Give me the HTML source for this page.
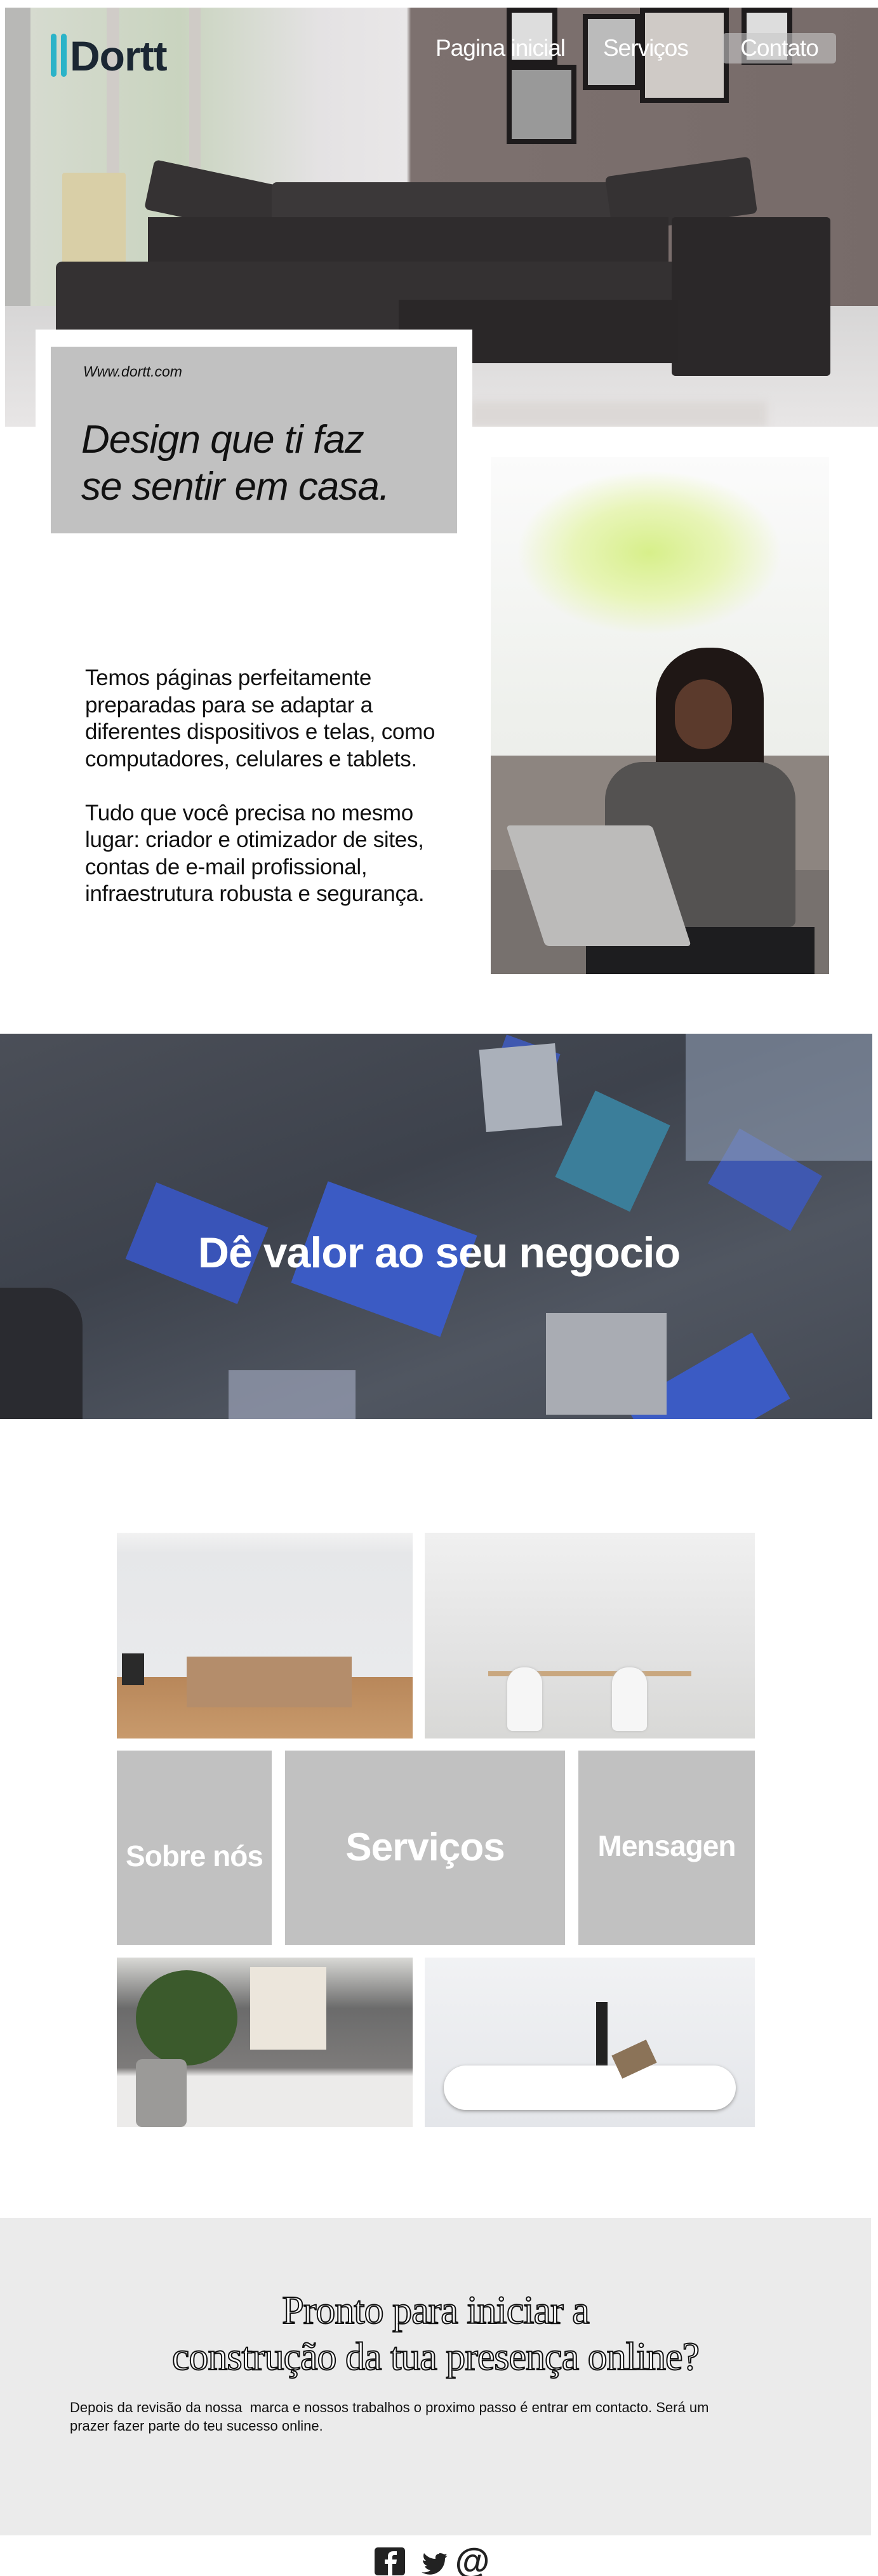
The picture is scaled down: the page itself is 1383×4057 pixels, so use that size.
<!DOCTYPE html>
<html><head><meta charset="utf-8">
<style>
*{margin:0;padding:0;box-sizing:border-box}
body{width:1383px;height:4057px;background:#fff;position:relative;overflow:hidden;font-family:"Liberation Sans",sans-serif}
.abs{position:absolute}
</style></head><body>

<!-- HERO -->
<div class="abs" style="left:8px;top:12px;width:1375px;height:660px;background:linear-gradient(90deg,#d8dcd2 0%,#c9d4bf 20%,#e4e2e3 36%,#e9e7e8 46%,#7d716f 46.5%,#776b69 100%);overflow:hidden">
  <div class="abs" style="left:0;top:0;width:40px;height:660px;background:#b8b8b6"></div>
  <div class="abs" style="left:160px;top:0;width:20px;height:480px;background:#d0ccc8"></div>
  <div class="abs" style="left:290px;top:0;width:18px;height:470px;background:#cfcbc6"></div>
  <div class="abs" style="left:90px;top:260px;width:100px;height:190px;background:#d9cfa7;border-radius:4px"></div>
  <div class="abs" style="left:0;top:470px;width:1375px;height:190px;background:linear-gradient(#d7d6d6,#e8e6e6)"></div>
  <div class="abs" style="left:790px;top:0;width:80px;height:90px;border:8px solid #1e1b1c;background:#ddd"></div>
  <div class="abs" style="left:910px;top:10px;width:90px;height:120px;border:8px solid #1e1b1c;background:#bbb"></div>
  <div class="abs" style="left:1000px;top:0;width:140px;height:150px;border:8px solid #1e1b1c;background:#cfcac6"></div>
  <div class="abs" style="left:1160px;top:0;width:80px;height:90px;border:8px solid #1e1b1c;background:#ddd"></div>
  <div class="abs" style="left:790px;top:90px;width:110px;height:125px;border:8px solid #1e1b1c;background:#999"></div>
  <div class="abs" style="left:225px;top:260px;width:210px;height:80px;background:#353233;transform:rotate(12deg);border-radius:8px"></div>
  <div class="abs" style="left:420px;top:275px;width:540px;height:80px;background:#3b3839;border-radius:8px"></div>
  <div class="abs" style="left:950px;top:250px;width:230px;height:90px;background:#353233;transform:rotate(-8deg);border-radius:8px"></div>
  <div class="abs" style="left:225px;top:330px;width:820px;height:140px;background:#2f2c2d"></div>
  <div class="abs" style="left:80px;top:400px;width:1000px;height:130px;background:#343132;border-radius:10px"></div>
  <div class="abs" style="left:1050px;top:330px;width:250px;height:250px;background:#2b2829;border-radius:6px"></div>
  <div class="abs" style="left:620px;top:460px;width:440px;height:100px;background:#2a2728"></div>
  <div class="abs" style="left:730px;top:620px;width:470px;height:40px;background:#dcd8d6;filter:blur(6px)"></div>
</div>
<div class="abs" style="left:0;top:0;width:1383px;height:12px;background:#fff"></div>

<!-- Logo -->
<div class="abs" style="left:80px;top:53px;width:9px;height:68px;background:#2bb3c8;border-radius:5px"></div>
<div class="abs" style="left:96px;top:53px;width:9px;height:68px;background:#2bb3c8;border-radius:5px"></div>
<div class="abs" style="left:110px;top:46px;font-size:66px;font-weight:bold;color:#1b2733;line-height:84px;letter-spacing:-1px">Dortt</div>

<!-- Nav -->
<div class="abs" style="left:686px;top:52px;font-size:37px;color:#fff;line-height:48px;letter-spacing:-1px">Pagina inicial</div>
<div class="abs" style="left:950px;top:52px;font-size:37px;color:#fff;line-height:48px;letter-spacing:-1px">Serviços</div>
<div class="abs" style="left:1138px;top:52px;width:179px;height:48px;background:rgba(200,200,200,.6);border-radius:6px;font-size:37px;color:#fff;line-height:48px;text-align:center;letter-spacing:-1px">Contato</div>

<div class="abs" style="left:56px;top:519px;width:688px;height:340px;background:#fff"></div>
<div class="abs" style="left:80px;top:546px;width:640px;height:294px;background:#c1c1c1"></div>
<div class="abs" style="left:131px;top:572px;font-size:23px;font-style:italic;color:#111">Www.dortt.com</div>
<div class="abs" style="left:128px;top:656px;font-size:62px;font-style:italic;color:#111;line-height:74px;letter-spacing:-1px">Design que ti faz<br>se sentir em casa.</div>

<!-- woman image -->
<div class="abs" style="left:773px;top:720px;width:533px;height:814px;background:linear-gradient(#fbfbfb,#eef0ec 50%,#e6e6e4);overflow:hidden">
  <div class="abs" style="left:40px;top:20px;width:420px;height:260px;background:radial-gradient(ellipse at center,#d7ef8a 0%,#e8f5b8 40%,rgba(255,255,255,0) 70%)"></div>
  <div class="abs" style="left:0;top:470px;width:533px;height:344px;background:#8d8580"></div>
  <div class="abs" style="left:0;top:650px;width:533px;height:164px;background:#77716e"></div>
  <div class="abs" style="left:260px;top:300px;width:170px;height:330px;background:#1f1715;border-radius:80px 80px 20px 20px"></div>
  <div class="abs" style="left:290px;top:350px;width:90px;height:110px;background:#5b3a2c;border-radius:45px"></div>
  <div class="abs" style="left:180px;top:480px;width:300px;height:260px;background:#545251;border-radius:60px 60px 10px 10px"></div>
  <div class="abs" style="left:150px;top:740px;width:360px;height:74px;background:#1d1d1f"></div>
  <div class="abs" style="left:55px;top:580px;width:230px;height:190px;background:#bcbbba;transform:skewX(18deg);border-radius:6px"></div>
</div>

<div class="abs" style="left:134px;top:1047px;font-size:35px;line-height:42.5px;color:#111;width:640px;letter-spacing:-0.3px">Temos páginas perfeitamente<br>preparadas para se adaptar a<br>diferentes dispositivos e telas, como<br>computadores, celulares e tablets.<br><br>Tudo que você precisa no mesmo<br>lugar: criador e otimizador de sites,<br>contas de e-mail profissional,<br>infraestrutura robusta e segurança.</div>

<!-- banner -->
<div class="abs" style="left:0;top:1628px;width:1374px;height:607px;background:linear-gradient(160deg,#4b4f58,#3d424c 40%,#505661 70%,#454a54);overflow:hidden">
  <div class="abs" style="left:215px;top:265px;width:190px;height:130px;background:#3954b8;transform:rotate(22deg)"></div>
  <div class="abs" style="left:480px;top:270px;width:250px;height:170px;background:#3b5bc4;transform:rotate(20deg)"></div>
  <div class="abs" style="left:1000px;top:520px;width:230px;height:120px;background:#3b5bc4;transform:rotate(-30deg)"></div>
  <div class="abs" style="left:1130px;top:180px;width:150px;height:100px;background:#3f58b0;transform:rotate(30deg)"></div>
  <div class="abs" style="left:785px;top:15px;width:90px;height:60px;background:#3f58b0;transform:rotate(20deg)"></div>
  <div class="abs" style="left:900px;top:110px;width:130px;height:150px;background:#3b7e9a;transform:rotate(25deg)"></div>
  <div class="abs" style="left:860px;top:440px;width:190px;height:160px;background:#a9acb3"></div>
  <div class="abs" style="left:760px;top:20px;width:120px;height:130px;background:#aab0ba;transform:rotate(-5deg)"></div>
  <div class="abs" style="left:1080px;top:0;width:294px;height:200px;background:#8f9cb2;opacity:.6"></div>
  <div class="abs" style="left:360px;top:530px;width:200px;height:77px;background:#9ba3b8;opacity:.7"></div>
  <div class="abs" style="left:0;top:400px;width:130px;height:207px;background:#2a2b30;border-radius:0 60px 0 0"></div>
</div>
<div class="abs" style="left:0;top:1930px;width:1383px;text-align:center;font-size:68px;font-weight:bold;color:#fff;line-height:86px;letter-spacing:-1px">Dê valor ao seu negocio</div>

<!-- gallery -->
<div class="abs" style="left:184px;top:2414px;width:466px;height:324px;background:linear-gradient(#f2f2f2 0%,#e6e7e9 10%,#e9eaec 70%,#b8875a 70%,#c89a6c 100%);overflow:hidden">
  <div class="abs" style="left:110px;top:195px;width:260px;height:80px;background:#b48d6b"></div>
  <div class="abs" style="left:8px;top:190px;width:35px;height:50px;background:#2a2a2a"></div>
</div>
<div class="abs" style="left:669px;top:2414px;width:520px;height:324px;background:linear-gradient(#f0f0f0,#e2e2e2 60%,#d8d8d6);overflow:hidden">
  <div class="abs" style="left:100px;top:218px;width:320px;height:8px;background:#c9a77f"></div>
  <div class="abs" style="left:130px;top:212px;width:55px;height:100px;background:#f6f6f6;border-radius:25px 25px 8px 8px;box-shadow:0 0 4px #bbb"></div>
  <div class="abs" style="left:295px;top:212px;width:55px;height:100px;background:#f6f6f6;border-radius:25px 25px 8px 8px;box-shadow:0 0 4px #bbb"></div>
</div>
<div class="abs" style="left:184px;top:2757px;width:244px;height:306px;background:#c1c1c1"></div>
<div class="abs" style="left:449px;top:2757px;width:441px;height:306px;background:#c1c1c1"></div>
<div class="abs" style="left:911px;top:2757px;width:278px;height:306px;background:#c1c1c1"></div>
<div class="abs" style="left:184px;top:2896px;width:244px;text-align:center;font-size:46px;font-weight:bold;color:#fff;letter-spacing:-1px">Sobre nós</div>
<div class="abs" style="left:449px;top:2874px;width:441px;text-align:center;font-size:62px;font-weight:bold;color:#fff;letter-spacing:-1px">Serviços</div>
<div class="abs" style="left:911px;top:2880px;width:278px;text-align:center;font-size:46px;font-weight:bold;color:#fff;letter-spacing:-1px">Mensagen</div>
<div class="abs" style="left:184px;top:3083px;width:466px;height:267px;background:linear-gradient(#d9d9d6 0%,#6b6b6b 30%,#7d7b7a 65%,#ecebea 70%);overflow:hidden">
  <div class="abs" style="left:30px;top:20px;width:160px;height:150px;background:#3b5a2c;border-radius:50%"></div>
  <div class="abs" style="left:210px;top:15px;width:120px;height:130px;background:#ece6dc"></div>
  <div class="abs" style="left:30px;top:160px;width:80px;height:107px;background:#9b9a98;border-radius:10px"></div>
</div>
<div class="abs" style="left:669px;top:3083px;width:520px;height:267px;background:linear-gradient(#f1f2f4,#e4e6ea);overflow:hidden">
  <div class="abs" style="left:270px;top:70px;width:18px;height:160px;background:#222"></div>
  <div class="abs" style="left:30px;top:170px;width:460px;height:70px;background:#fff;border-radius:40px;box-shadow:0 2px 6px #999"></div>
  <div class="abs" style="left:300px;top:140px;width:60px;height:40px;background:#8b7358;transform:rotate(-25deg)"></div>
</div>

<!-- CTA -->
<div class="abs" style="left:0;top:3493px;width:1372px;height:500px;background:#ebebeb"></div>
<div class="abs" style="left:0;top:3603px;width:1372px;text-align:center;font-family:'Liberation Serif',serif;font-size:62px;line-height:73px;color:#fff;-webkit-text-stroke:2px #111;letter-spacing:-1px">Pronto para iniciar a<br>construção da tua presença online?</div>
<div class="abs" style="left:110px;top:3777px;width:1110px;font-size:22px;line-height:29px;color:#111">Depois da revisão da nossa&nbsp; marca e nossos trabalhos o proximo passo é entrar em contacto. Será um<br>prazer fazer parte do teu sucesso online.</div>

<!-- icons -->
<svg class="abs" style="left:588px;top:4008px" width="184" height="49" viewBox="0 0 184 49">
  <rect x="2" y="4" width="48" height="44" rx="5" fill="#222"/>
  <path d="M30 48V30h6l1-7h-7v-4c0-2 1-3 3-3h4V10h-5c-6 0-9 3-9 8v5h-5v7h5v18z" fill="#fff"/>
  <path d="M104 14c-4 0-7 3-6 8-8 0-14-4-18-9-2 4-1 9 3 12-2 0-3 0-5-1 0 4 3 8 7 9-2 0-3 1-4 0 1 4 5 6 9 7-4 3-9 4-14 3 17 10 37-1 37-22l4-4-4 1 3-4-4 1c-2-1-4-2-8-2z" fill="#222"/>
  <text x="156" y="44" font-family="Liberation Sans" font-weight="bold" font-size="56" fill="#222" text-anchor="middle">@</text>
</svg>

</body></html>
